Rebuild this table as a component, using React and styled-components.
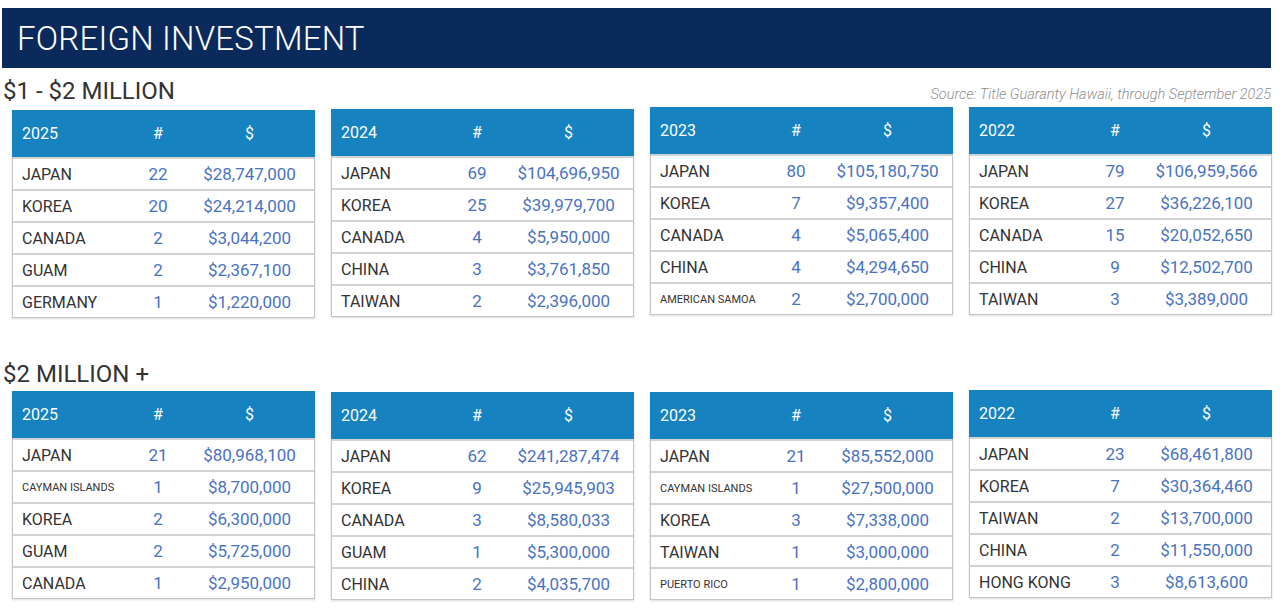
import React from 'react';
import styled, { createGlobalStyle } from 'styled-components';

const GlobalStyle = createGlobalStyle`
  body {
    margin: 0;
    background: #ffffff;
    font-family: Roboto, "Liberation Sans", sans-serif;
  }
`;

const Page = styled.div`
  width: 1280px;
  height: 614px;
  padding: 8px 9px 0 2px;
  box-sizing: border-box;
  overflow: hidden;
`;

const TitleBar = styled.div`
  height: 60px;
  background: #0b2a5c;
  display: flex;
  align-items: center;
  padding-left: 15px;
`;

const Title = styled.h1`
  margin: 0;
  color: #ffffff;
  font-size: 33px;
  font-weight: 300;
  letter-spacing: 0.2px;
`;

const SectionHead = styled.div`
  display: flex;
  justify-content: space-between;
  align-items: flex-end;
  margin-top: ${(p) => p.$top}px;
  padding-left: 1px;
`;

const SectionTitle = styled.h2`
  margin: 0;
  color: #333333;
  font-size: 24px;
  font-weight: 400;
  line-height: 28px;
`;

const Source = styled.span`
  color: #8e8e8e;
  font-size: 14.5px;
  font-style: italic;
  font-weight: 300;
  margin-bottom: 2px;
`;

const TableRow = styled.div`
  display: grid;
  grid-template-columns: repeat(4, 303px);
  column-gap: 16px;
  padding-left: 10px;
  margin-top: 2px;
  align-items: start;
`;

const Table = styled.div`
  border: 1px solid #c4c4c4;
  border-top: none;
  box-shadow: 0 1px 2px rgba(0, 0, 0, 0.15);
  margin-top: ${(p) => p.$shift || 0}px;
`;

const Grid = styled.div`
  display: grid;
  grid-template-columns: 118px 54px 1fr;
  align-items: center;
`;

const Header = styled(Grid)`
  height: 47px;
  background: #1682bf;
  color: #ffffff;
  font-size: 16px;
  margin: 0 -1px;
  padding: 0 1px;
`;

const Row = styled(Grid)`
  height: 30px;
  border-top: 2px solid #d3d3d3;
  &:first-of-type {
    border-top: none;
    height: 33px;
  }
`;

const Country = styled.span`
  padding-left: 9px;
  color: ${(p) => (p.$head ? '#ffffff' : '#333333')};
  font-size: ${(p) => (p.$small ? '11px' : '16px')};
  white-space: nowrap;
`;

const Cell = styled.span`
  text-align: center;
  color: ${(p) => (p.$head ? '#ffffff' : '#4a72c2')};
  font-size: ${(p) => (p.$head ? '16px' : '17px')};
`;

const sections = [
  {
    title: '$1 - $2 MILLION',
    top: 9,
    tables: [
      {
        year: '2025',
        shift: 3,
        rows: [
          ['JAPAN', '22', '$28,747,000'],
          ['KOREA', '20', '$24,214,000'],
          ['CANADA', '2', '$3,044,200'],
          ['GUAM', '2', '$2,367,100'],
          ['GERMANY', '1', '$1,220,000'],
        ],
      },
      {
        year: '2024',
        shift: 2,
        rows: [
          ['JAPAN', '69', '$104,696,950'],
          ['KOREA', '25', '$39,979,700'],
          ['CANADA', '4', '$5,950,000'],
          ['CHINA', '3', '$3,761,850'],
          ['TAIWAN', '2', '$2,396,000'],
        ],
      },
      {
        year: '2023',
        rows: [
          ['JAPAN', '80', '$105,180,750'],
          ['KOREA', '7', '$9,357,400'],
          ['CANADA', '4', '$5,065,400'],
          ['CHINA', '4', '$4,294,650'],
          ['AMERICAN SAMOA', '2', '$2,700,000', true],
        ],
      },
      {
        year: '2022',
        rows: [
          ['JAPAN', '79', '$106,959,566'],
          ['KOREA', '27', '$36,226,100'],
          ['CANADA', '15', '$20,052,650'],
          ['CHINA', '9', '$12,502,700'],
          ['TAIWAN', '3', '$3,389,000'],
        ],
      },
    ],
  },
  {
    title: '$2 MILLION +',
    top: 42,
    tables: [
      {
        year: '2025',
        shift: 1,
        rows: [
          ['JAPAN', '21', '$80,968,100'],
          ['CAYMAN ISLANDS', '1', '$8,700,000', true],
          ['KOREA', '2', '$6,300,000'],
          ['GUAM', '2', '$5,725,000'],
          ['CANADA', '1', '$2,950,000'],
        ],
      },
      {
        year: '2024',
        shift: 2,
        rows: [
          ['JAPAN', '62', '$241,287,474'],
          ['KOREA', '9', '$25,945,903'],
          ['CANADA', '3', '$8,580,033'],
          ['GUAM', '1', '$5,300,000'],
          ['CHINA', '2', '$4,035,700'],
        ],
      },
      {
        year: '2023',
        shift: 2,
        rows: [
          ['JAPAN', '21', '$85,552,000'],
          ['CAYMAN ISLANDS', '1', '$27,500,000', true],
          ['KOREA', '3', '$7,338,000'],
          ['TAIWAN', '1', '$3,000,000'],
          ['PUERTO RICO', '1', '$2,800,000', true],
        ],
      },
      {
        year: '2022',
        rows: [
          ['JAPAN', '23', '$68,461,800'],
          ['KOREA', '7', '$30,364,460'],
          ['TAIWAN', '2', '$13,700,000'],
          ['CHINA', '2', '$11,550,000'],
          ['HONG KONG', '3', '$8,613,600'],
        ],
      },
    ],
  },
];

function YearTable({ year, rows, shift }) {
  return (
    <Table $shift={shift}>
      <Header>
        <Country $head>{year}</Country>
        <Cell $head>#</Cell>
        <Cell $head>$</Cell>
      </Header>
      {rows.map(([name, count, amount, small]) => (
        <Row key={name}>
          <Country $small={small}>{name}</Country>
          <Cell>{count}</Cell>
          <Cell>{amount}</Cell>
        </Row>
      ))}
    </Table>
  );
}

export default function App() {
  return (
    <>
      <GlobalStyle />
      <Page>
        <TitleBar>
          <Title>FOREIGN INVESTMENT</Title>
        </TitleBar>
        {sections.map((section, i) => (
          <React.Fragment key={section.title}>
            <SectionHead $top={section.top}>
              <SectionTitle>{section.title}</SectionTitle>
              {i === 0 && (
                <Source>Source: Title Guaranty Hawaii, through September 2025</Source>
              )}
            </SectionHead>
            <TableRow>
              {section.tables.map((t) => (
                <YearTable key={t.year} {...t} />
              ))}
            </TableRow>
          </React.Fragment>
        ))}
      </Page>
    </>
  );
}
